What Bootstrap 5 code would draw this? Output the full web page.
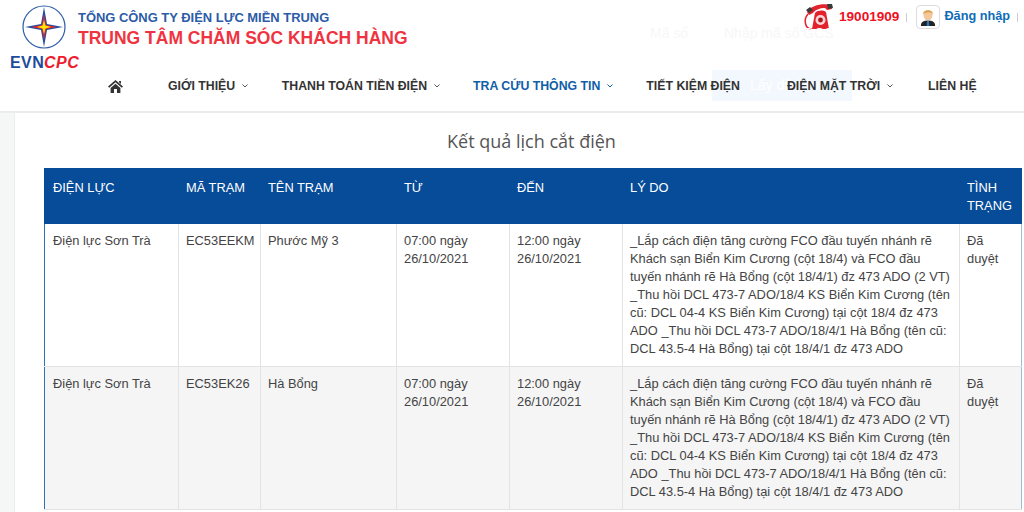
<!DOCTYPE html>
<html lang="vi">
<head>
<meta charset="utf-8">
<link href="https://cdn.jsdelivr.net/npm/bootstrap@5.3.0/dist/css/bootstrap.min.css" rel="stylesheet">
<style>
html,body{height:512px;overflow:hidden}
body{font-family:"Liberation Sans",Arial,sans-serif;background:#fff;color:#333}
.site-head{height:113px;border-bottom:2px solid #ececec;position:relative}
.top-row{height:71px}
.brand-mark{width:80px;margin-left:8px;padding-top:3px}
.evn{font-weight:700;font-size:16px;line-height:16px;color:#1d4c9b;margin-top:6px;letter-spacing:.4px;padding-left:2px}
.evn i{color:#ed1c2e;font-weight:700}
.brand-text{padding-top:9px;margin-left:-10px}
.brand-l1{font-size:12.95px;line-height:18px;color:#2c5ba8;font-weight:700}
.brand-l2{font-size:17.5px;line-height:22px;color:#ef3340;font-weight:700}
.hotline{color:#f0101e;font-weight:700;font-size:13.6px;margin-left:6px}
.top-tools{padding-top:3px;margin-right:6px}
.sepa{width:1px;height:9px;background:#ccc;margin:0 9px 0 7px}
.avatar{width:24px;height:24px;border:1px solid #ddd;border-radius:4px;margin-right:4px}
.login{color:#0f6cb6;font-size:12.7px;font-weight:700}
.main-nav{padding-left:108px;height:30px;font-size:12.3px;color:#333;font-weight:700;white-space:nowrap;position:relative}
.nav-cell{line-height:30px;flex:none;position:relative}
.nav-cell.on{color:#0f5ea8}
.caret-s{width:6px;height:4px;margin-left:7px;vertical-align:2px}
.ghost{position:absolute;color:#f7f7f7;font-size:14px;font-weight:400}
.ghost-top{top:23px}
.ghost-btn{left:712px;top:-1px;width:140px;height:31px;background:#f2f8fd;color:#fff;line-height:31px;padding-left:38px}
.page-bg{background:#f5f6f6;padding-left:14px;height:399px}
.panel{background:#fff;border-left:1px solid #ececec;height:399px;padding:0 0 0 29px;overflow:hidden}
.result-title{font-size:18px;line-height:22px;font-family:"Open Sans","Liberation Sans",sans-serif;color:#555;text-align:center;padding-top:17px;margin:0;height:55px;font-weight:400;padding-right:5px}
.result-tb{table-layout:fixed;width:977px;font-size:12.85px;line-height:18px;color:#444;border-collapse:collapse;margin:0}
.result-tb th,.result-tb td{padding:8px 9px 8px 7px;vertical-align:top;border:1px solid #e3e3e3}
.result-tb th{background:#074c98;color:#fff;font-weight:400;border-color:#074c98;padding-top:10px;padding-bottom:8px;box-shadow:none}
.result-tb td{background:#fff;color:#444;box-shadow:none}
.result-tb tbody tr.alt td{background:#f5f5f5}
.result-tb td:first-child{border-left:1px solid #2f72b5}
.result-tb th:first-child,.result-tb td:first-child{padding-left:8px}
.result-tb td:last-child{border-right:1px solid #9dbcdc}
</style>
</head>
<body>
<header class="site-head">
  <div class="top-row d-flex">
    <div class="brand-mark flex-none">
      <svg width="46" height="46" viewBox="0 0 46 46" class="d-block" style="margin-left:14px">
        <circle cx="22" cy="24" r="21" fill="#fff" stroke="#2a5aa8" stroke-width="1.2"/>
        <path d="M22 4 L25 21 L41 24 L25 27 L22 44 L19 27 L3 24 L19 21Z" fill="#24509f"/>
        <path d="M22 11 L24 22 L35 24 L24 26 L22 37 L20 26 L9 24 L20 22Z" fill="#e8232e"/>
        <path d="M22 17 L23.4 22.6 L29 24 L23.4 25.4 L22 31 L20.6 25.4 L15 24 L20.6 22.6Z" fill="#ffe600"/>
      </svg>
      <div class="evn">EVN<i>CPC</i></div>
    </div>
    <div class="brand-text">
      <div class="brand-l1">TỔNG CÔNG TY ĐIỆN LỰC MIỀN TRUNG</div>
      <div class="brand-l2">TRUNG TÂM CHĂM SÓC KHÁCH HÀNG</div>
    </div>
    <div class="ms-auto d-flex align-items-center align-self-start top-tools">
      <svg width="30" height="28" viewBox="0 0 30 28">
        <path d="M4 9 C8 2 20 0 28 2 L29 6 L24 7 L22 5 C17 5 12 7 10 10 L6 12Z" fill="#e2222c"/>
        <path d="M3 7 l4 -3 3 3 -4 3Z M24 1 h5 l1 4 -5 1Z" fill="#3a3a3a"/>
        <path d="M12 10 C15 7 20 7 23 9 L26 26 H9Z" fill="#e2222c"/>
        <circle cx="17.5" cy="17" r="5" fill="#f9d6d6"/><circle cx="17.5" cy="17" r="2.4" fill="#b3121c"/>
        <path d="M5 11 C0 17 2 26 9 26" fill="none" stroke="#e2222c" stroke-width="1.5"/>
      </svg>
      <span class="hotline">19001909</span>
      <span class="sepa"></span>
      <span class="avatar d-flex align-items-center justify-content-center">
        <svg width="16" height="20" viewBox="0 0 18 20"><path d="M1 20 C1 15 5 14 9 14 C13 14 17 15 17 20Z" fill="#222"/><path d="M8 14 H10 L10.5 20 H7.5Z" fill="#2778c4"/><ellipse cx="9" cy="8" rx="5" ry="6" fill="#f3c79a"/><path d="M3.5 7 C3 1 15 1 14.5 7 C13 4 6 4 3.5 7Z" fill="#d9a24e"/></svg>
      </span>
      <span class="login">Đăng nhập</span>
      <span class="sepa me-0"></span>
    </div>
  </div>
  <nav class="main-nav d-flex">
    <span class="ghost ghost-btn">Lấy dữ liệu</span>
    <span class="nav-cell d-flex align-items-center" style="margin-right:45px"><svg width="15" height="13" viewBox="0 0 15 13"><path d="M7.5 0 L15 6.6 L13.8 7.8 L7.5 2.3 L1.2 7.8 L0 6.6Z M11 1h2v3l-2-1.7Z M2.6 8 L7.5 3.7 L12.4 8 V13 H9 V9 H6 V13 H2.6Z" fill="#333"/></svg></span>
    <span class="nav-cell" style="margin-right:33.6px">GIỚI THIỆU<svg class="caret-s" viewBox="0 0 6 4"><path d="M.5.5 3 3 5.5.5" fill="none" stroke="#555"/></svg></span>
    <span class="nav-cell" style="margin-right:33px">THANH TOÁN TIỀN ĐIỆN<svg class="caret-s" viewBox="0 0 6 4"><path d="M.5.5 3 3 5.5.5" fill="none" stroke="#555"/></svg></span>
    <span class="nav-cell on" style="margin-right:33px">TRA CỨU THÔNG TIN<svg class="caret-s" viewBox="0 0 6 4"><path d="M.5.5 3 3 5.5.5" fill="none" stroke="#0f5ea8"/></svg></span>
    <span class="nav-cell" style="margin-right:47px">TIẾT KIỆM ĐIỆN</span>
    <span class="nav-cell" style="margin-right:35px">ĐIỆN MẶT TRỜI<svg class="caret-s" viewBox="0 0 6 4"><path d="M.5.5 3 3 5.5.5" fill="none" stroke="#555"/></svg></span>
    <span class="nav-cell">LIÊN HỆ</span>
  </nav>
</header>
<div class="page-bg">
  <div class="panel">
    <h1 class="result-title">Kết quả lịch cắt điện</h1>
    <table class="table result-tb">
      <colgroup><col style="width:134px"><col style="width:82px"><col style="width:136px"><col style="width:113px"><col style="width:113px"><col style="width:337px"><col style="width:62px"></colgroup>
      <thead><tr><th>ĐIỆN LỰC</th><th>MÃ TRẠM</th><th>TÊN TRẠM</th><th>TỪ</th><th>ĐẾN</th><th>LÝ DO</th><th>TÌNH TRẠNG</th></tr></thead>
      <tbody>
        <tr><td>Điện lực Sơn Trà</td><td>EC53EEKM</td><td>Phước Mỹ 3</td><td>07:00 ngày 26/10/2021</td><td>12:00 ngày 26/10/2021</td><td>_Lắp cách điện tăng cường FCO đầu tuyến nhánh rẽ Khách sạn Biển Kim Cương (cột 18/4) và FCO đầu tuyến nhánh rẽ Hà Bổng (cột 18/4/1) đz 473 ADO (2 VT) _Thu hồi DCL 473-7 ADO/18/4 KS Biển Kim Cương (tên cũ: DCL 04-4 KS Biển Kim Cương) tại cột 18/4 đz 473 ADO _Thu hồi DCL 473-7 ADO/18/4/1 Hà Bổng (tên cũ: DCL 43.5-4 Hà Bổng) tại cột 18/4/1 đz 473 ADO</td><td>Đã duyệt</td></tr>
        <tr class="alt"><td>Điện lực Sơn Trà</td><td>EC53EK26</td><td>Hà Bổng</td><td>07:00 ngày 26/10/2021</td><td>12:00 ngày 26/10/2021</td><td>_Lắp cách điện tăng cường FCO đầu tuyến nhánh rẽ Khách sạn Biển Kim Cương (cột 18/4) và FCO đầu tuyến nhánh rẽ Hà Bổng (cột 18/4/1) đz 473 ADO (2 VT) _Thu hồi DCL 473-7 ADO/18/4 KS Biển Kim Cương (tên cũ: DCL 04-4 KS Biển Kim Cương) tại cột 18/4 đz 473 ADO _Thu hồi DCL 473-7 ADO/18/4/1 Hà Bổng (tên cũ: DCL 43.5-4 Hà Bổng) tại cột 18/4/1 đz 473 ADO</td><td>Đã duyệt</td></tr>
      </tbody>
    </table>
  </div>
</div>
<span class="ghost ghost-top" style="left:650px">Mã số</span>
<span class="ghost ghost-top" style="left:724px">Nhập mã số GCS</span>
</body>
</html>
